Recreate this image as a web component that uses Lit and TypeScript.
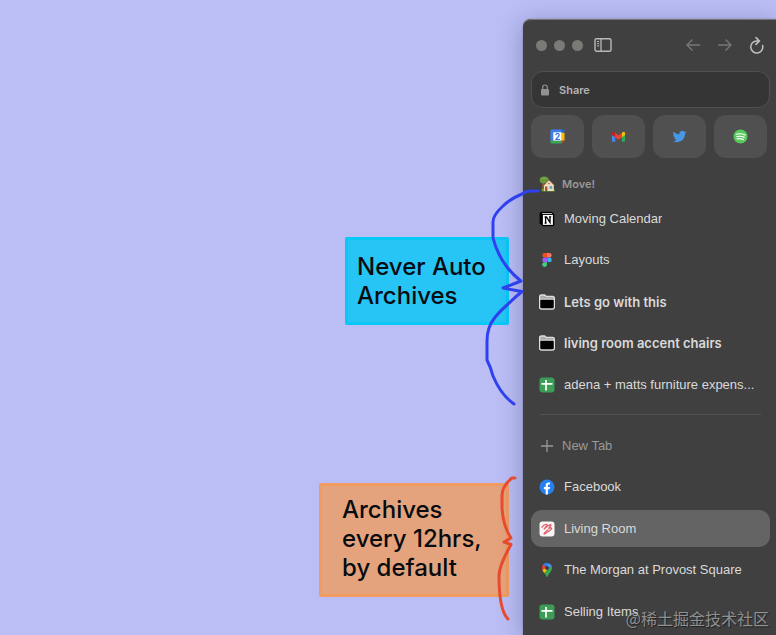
import { LitElement, html, css, svg } from "lit";
import { customElement } from "lit/decorators.js";
import { classMap } from "lit/directives/class-map.js";

type Tab = { name: string; icon: unknown; bold?: boolean; selected?: boolean };

const icon = (box: string, body: unknown) =>
  html`<svg class="icon" viewBox=${box} aria-hidden="true">${body}</svg>`;

const notionIcon = icon("0 0 16 16", svg`
  <path d="M1.800.8h11L15.300 3v11L14 15.300H3.800L.6 12.600V2Z" fill="#000"/>
  <path d="M2.600 1.900h9.800l1.200.9H3.800Z" fill="#fff"/>
  <path d="M3.900 3.900h10v10h-10Z" fill="#fff"/>
  <path d="M6.600 12V6h.9l3.500 5.600V5.600M5.600 6h2M10 5.800h2.200M5.600 12h2" fill="none" stroke="#000" stroke-width="1.300"/>`);

const figmaIcon = icon("0 0 16 16", svg`
  <path d="M8 1H5.600a2.300 2.300 0 0 0 0 4.600H8Z" fill="#f24e1e"/>
  <path d="M8 1h2.400a2.300 2.300 0 0 1 0 4.600H8Z" fill="#ff7262"/>
  <path d="M8 5.600H5.600a2.300 2.300 0 0 0 0 4.600H8Z" fill="#a259ff"/>
  <circle cx="10.400" cy="7.900" r="2.300" fill="#35b5f6"/>
  <path d="M8 10.200H5.600A2.400 2.400 0 1 0 8 12.600Z" fill="#3fd07c"/>`);

const folderIcon = icon("0 0 16 16", svg`
  <path d="M.6 13V2.800Q.6 1 2.400 1H5.600L7.200 2.300H13.600Q15.400 2.300 15.400 4.100V13Q15.400 15 13.400 15H2.600Q.6 15 .6 13Z" fill="#aaa" stroke="#dedede" stroke-width="1.300"/>
  <path d="M1.300 6.500Q1.300 5.400 2.500 5.400H13.500Q14.700 5.400 14.700 6.500V13Q14.700 14.300 13.400 14.300H2.600Q1.300 14.300 1.300 13Z" fill="#000"/>
  <path d="M1.200 6.200Q1.400 5.100 2.500 5.100H13.500Q14.600 5.100 14.800 6.200" fill="none" stroke="#dedede"/>`);

const sheetsIcon = icon("0 0 16 16", svg`
  <rect x=".5" y=".5" width="15" height="15" rx="3" fill="#3c9d57"/>
  <path d="M2.500 6.800h11M7 3v10.500" stroke="#fff" stroke-width="1.700"/>`);

const facebookIcon = icon("0 0 16 16", svg`
  <circle cx="8" cy="8" r="7.500" fill="#2680ee"/>
  <path d="M6.700 15.400V10.200H4.900V8h1.800V6.500c0-2 1.100-3 2.800-3l1.500.1v1.900h-.9c-.9 0-1.200.5-1.200 1.200V8H11l-.4 2.200H8.900v5.200Z" fill="#fff"/>`);

const livingIcon = icon("0 0 16 16", svg`
  <rect x=".5" y=".5" width="15" height="15" rx="3" fill="#f8f4f4"/>
  <path d="M3 6.200Q5.500 2.800 8 3.600Q8.500 4.800 4.800 8.200Q8.500 4.500 11.500 3.600Q13 4 9.500 7.500Q12.500 6.200 12.600 7.500Q11.500 9.500 5.500 13Q3.800 13 9 8.800" fill="none" stroke="#e0606a" stroke-width="1.300" stroke-linecap="round"/>`);

const mapsIcon = icon("0 0 16 16", svg`
  <path d="M3.900 2.700A5.200 5.200 0 0 1 9.600 1.200L8 6Z" fill="#2a80ee"/>
  <path d="M9.600 1.200A5.200 5.200 0 0 1 12.700 3.800L7 9.800L4.300 9Z" fill="#4a90f5"/>
  <path d="M3.900 2.700A5.200 5.200 0 0 0 3.400 8.200L8 4.800Z" fill="#ea4335"/>
  <path d="M3.400 8.200L5.400 11.200L10.200 6L7.500 5Z" fill="#fbbc04"/>
  <path d="M12.700 3.800C14 7 12.200 9 10.700 10.900Q9 13 8.400 15H7.600Q7 13 5.400 11.100Z" fill="#34a853"/>
  <circle cx="8" cy="6" r="1.900" fill="#303a48"/>`);

const plusIcon = icon("0 0 16 16", svg`
  <path d="M2 8h12M8 2v12" stroke="#999" stroke-width="1.300"/>`);

const houseIcon = icon("0 0 16 16", svg`
  <path d="M3 5h1.800v7.500H3Z" fill="#8a5a35"/>
  <ellipse cx="5.200" cy="3.900" rx="4.600" ry="3.500" fill="#67983f"/>
  <path d="M3.200 2.600q2-1.500 4 0" fill="none" stroke="#83b458"/>
  <path d="M2 13.200Q8 10.800 15.800 13.500V15.400H3Z" fill="#5c9437"/>
  <path d="M4.900 9.300L10 4.200L14.800 9V15H4.900Z" fill="#f0dfc1"/>
  <path d="M4.500 9.800L9.900 4L15.200 9.300" fill="none" stroke="#bd6d4d"/>
  <path d="M6 10.500h2.400V15H6Z" fill="#965c38"/>
  <path d="M10.500 10h2.700v3h-2.700Z" fill="#69a9cb"/>
  <circle cx="10" cy="7.600" r=".8" fill="#805d4a"/>`);

const calendarIcon = icon("0 0 16 16", svg`
  <path d="M2 .5h10.500V4H4v8.500H.5V2Q.5.500 2 .5Z" fill="#3c7ff0"/>
  <path d="M12.300.5h1.700q1.500 0 1.500 1.500v2h-3.200Z" fill="#2465d3"/>
  <path d="M12.300 4h3.200v8.300h-3.200Z" fill="#fbbc04"/>
  <path d="M.5 12.300h11.800v3.200H2Q.5 15.500 .5 14Z" fill="#35a853"/>
  <path d="M12.300 12.300h3.200l-3.200 3.200Z" fill="#e74336"/>
  <path d="M3.500 3.500h8.900v8.900H3.500Z" fill="#fff"/>
  <text class="day" x="8" y="11.200" text-anchor="middle">2</text>`);

const gmailIcon = icon("0 0 16 16", svg`
  <path d="M1 5.500L4.500 7.800V13.700H2.200Q1 13.700 1 12.500Z" fill="#4688f0"/>
  <path d="M11.500 7.800L15 5.500V12.500Q15 13.700 13.800 13.700H11.500Z" fill="#35a853"/>
  <path d="M11.500 4.200L12.600 3.200Q15 2.100 15 4.700V6.300L11.500 8.900Z" fill="#fbbc04"/>
  <path d="M1 4.700Q1 2.100 3.400 3.200L4.500 4.200V8.900L1 6.300Z" fill="#c5221f"/>
  <path d="M4.400 4.100L8 6.800L11.600 4.100V8.800L8 11.500L4.400 8.800Z" fill="#ea4335"/>`);

const twitterIcon = icon("-1 -1 26 26", svg`
  <path d="M23.950 4.570a10 10 0 0 1-2.820.77 4.960 4.960 0 0 0 2.160-2.720c-.95.550-2 .95-3.130 1.180a4.920 4.920 0 0 0-8.380 4.480C7.690 8.100 4.070 6.130 1.640 3.160a4.820 4.820 0 0 0-.67 2.480c0 1.710.87 3.210 2.190 4.100a4.900 4.900 0 0 1-2.230-.62v.06a4.920 4.920 0 0 0 3.950 4.830 5 5 0 0 1-2.210.08 4.940 4.940 0 0 0 4.600 3.420A9.870 9.870 0 0 1 0 19.540a13.990 13.990 0 0 0 7.560 2.210c9.050 0 14-7.500 14-13.980 0-.21 0-.42-.02-.63a9.940 9.940 0 0 0 2.460-2.550Z" fill="#4699e9"/>`);

const spotifyIcon = icon("0 0 16 16", svg`
  <circle cx="8" cy="8" r="7.500" fill="#58ca5d"/>
  <path d="M3.500 5.600Q8.500 4.200 12.800 6.400M4 8.200Q8.300 7 12 8.900M4.400 10.600Q8 9.700 11.200 11.300" fill="none" stroke="#fff" stroke-width="1.300" stroke-linecap="round"/>`);

const favorites = [
  { name: "Calendar", icon: calendarIcon },
  { name: "Gmail", icon: gmailIcon },
  { name: "Twitter", icon: twitterIcon },
  { name: "Spotify", icon: spotifyIcon },
];

const pinned: Tab[] = [
  { name: "Moving Calendar", icon: notionIcon },
  { name: "Layouts", icon: figmaIcon },
  { name: "Lets go with this", icon: folderIcon, bold: true },
  { name: "living room accent chairs", icon: folderIcon, bold: true },
  { name: "adena + matts furniture expens...", icon: sheetsIcon },
];

const today: Tab[] = [
  { name: "Facebook", icon: facebookIcon },
  { name: "Living Room", icon: livingIcon, selected: true },
  { name: "The Morgan at Provost Square", icon: mapsIcon },
  { name: "Selling Items", icon: sheetsIcon },
];

@customElement("browser-sidebar")
export class BrowserSidebar extends LitElement {
  static styles = css`
    :host {
      display: block;
      box-sizing: border-box;
      padding: 9px 6px 4px 8px;
      border-radius: 8px 0 0 0;
      background: #404040;
      border-top: 1px solid #77777c;
      box-shadow: 0 4px 24px rgba(20, 20, 60, 0.3), 0 0 1px #333;
      color: #dadada;
      font: 13px/20px "Liberation Sans", sans-serif;
    }
    button, input { font: inherit; color: inherit; }
    button { padding: 0; border: 0; background: none; }
    a { color: inherit; text-decoration: none; }
    .toolbar { display: flex; align-items: center; height: 32px; padding: 0 5px; }
    .lights { display: flex; gap: 7px; margin-right: 11px; }
    .light { width: 11px; height: 11px; border-radius: 50%; background: #7c7a77; }
    .nav { display: flex; gap: 16px; margin-left: auto; }
    .tool { display: block; height: 18px; }
    .tool svg { display: block; width: 16px; height: 18px; fill: none; overflow: visible; }
    .tool .wide { width: 18px; }
    .address {
      display: flex;
      align-items: center;
      gap: 10px;
      height: 35px;
      margin-top: 10px;
      padding: 0 9px;
      border: 1px solid #505050;
      border-radius: 12px;
      background: #353535;
    }
    .lock { width: 8px; height: 12px; }
    .field {
      flex: 1;
      min-width: 0;
      padding: 0;
      border: 0;
      outline: 0;
      background: none;
      color: #b4b4b4;
      font: 600 11px/20px Inter, sans-serif;
    }
    .favorites { display: grid; grid-template-columns: repeat(4, 1fr); gap: 8px; margin: 7px 3px 0 0; }
    .favorite { display: grid; place-items: center; height: 43px; border-radius: 12px; background: #505050; }
    .icon { display: block; flex: none; width: 16px; height: 16px; }
    .favorite .icon { width: 15px; height: 15px; }
    .day { font: 700 9px Inter, sans-serif; fill: #2f6fe0; }
    .space {
      display: flex;
      align-items: center;
      gap: 7px;
      height: 20px;
      margin: 16px 0 6px;
      padding: 0 8px;
      color: #999;
      font: 600 11px/20px Inter, sans-serif;
    }
    .tabs {
      display: flex;
      flex-direction: column;
      justify-content: space-between;
      min-height: 203px;
      margin: 0;
      padding: 0;
      list-style: none;
    }
    .tab {
      display: flex;
      align-items: center;
      gap: 9px;
      box-sizing: border-box;
      width: 100%;
      height: 37px;
      padding: 0 8px;
      border-radius: 11px;
      text-align: left;
    }
    .tab.bold { font: 600 13px/20px Inter, sans-serif; }
    .tab.selected { background: #646464; }
    .tab.new { gap: 7px; color: #999; }
    .name { overflow: hidden; white-space: nowrap; text-overflow: ellipsis; }
    .divider { height: 1px; margin: 11px 9px 12px; border: 0; background: #515151; }
  `;

  private row(tab: Tab) {
    const classes = { tab: true, bold: !!tab.bold, selected: !!tab.selected };
    return html`<li><a class=${classMap(classes)} href="#">${tab.icon}<span class="name">${tab.name}</span></a></li>`;
  }

  render() {
    return html`
      <div class="toolbar">
        <div class="lights">
          <button class="light" aria-label="Close"></button>
          <button class="light" aria-label="Minimize"></button>
          <button class="light" aria-label="Zoom"></button>
        </div>
        <button class="tool" aria-label="Toggle sidebar">
          <svg class="wide" viewBox="0 0 18 18" stroke="#b8b8b8">
            <rect x="1" y="2.700" width="16" height="12.600" rx="1.500" stroke-width="1.400"/>
            <path d="M7 3v12" stroke-width="1.300"/>
            <path d="M3 5.500h2.200M3 7.700h2.200M3 9.900h2.200"/>
          </svg>
        </button>
        <div class="nav">
          <button class="tool" aria-label="Back">
            <svg viewBox="0 0 16 18" stroke="#777" stroke-width="1.400" stroke-linecap="round"><path d="M14.500 9H2M7 4L2 9l5 5"/></svg>
          </button>
          <button class="tool" aria-label="Forward">
            <svg viewBox="0 0 16 18" stroke="#777" stroke-width="1.400" stroke-linecap="round"><path d="M1.500 9H14M9 4l5 5-5 5"/></svg>
          </button>
          <button class="tool" aria-label="Reload">
            <svg viewBox="0 0 16 18" stroke="#c2c2c2" stroke-width="1.500" stroke-linecap="round"><path d="M13.600 9.600A6 6 0 1 1 7.900 5H9.500M7 1.600L10.400 5L7 8.400"/></svg>
          </button>
        </div>
      </div>
      <label class="address">
        <svg class="lock" viewBox="0 0 8 12" aria-hidden="true">
          <path d="M1.700 6V3.500a2.300 2.500 0 0 1 4.600 0V6" fill="none" stroke="#929292" stroke-width="1.200"/>
          <rect y="5" width="8" height="6.500" rx="1" fill="#929292"/>
        </svg>
        <input class="field" aria-label="Address" value="Share">
      </label>
      <nav class="favorites">
        ${favorites.map((f) => html`<a class="favorite" href="#" aria-label=${f.name}>${f.icon}</a>`)}
      </nav>
      <div class="space">${houseIcon}<span>Move!</span></div>
      <ul class="tabs">${pinned.map((t) => this.row(t))}</ul>
      <hr class="divider">
      <ul class="tabs">
        <li><button class="tab new">${plusIcon}<span class="name">New Tab</span></button></li>
        ${today.map((t) => this.row(t))}
      </ul>
    `;
  }
}

@customElement("app-root")
export class AppRoot extends LitElement {
  static styles = css`
    :host {
      display: grid;
      position: relative;
      grid-template-columns: minmax(0, 1fr) 253px;
      min-height: 100vh;
      overflow: hidden;
      background: #bbbef5;
    }
    .notes {
      display: flex;
      flex-direction: column;
      align-items: flex-end;
      gap: 158px;
      padding: 237px 14px 0 0;
    }
    .note {
      margin: 0;
      box-sizing: border-box;
      border: 3px solid;
      border-radius: 2px;
      color: #080c10;
      font: 500 24px/29px Inter, sans-serif;
    }
    .line { display: block; }
    .never { width: 164px; padding: 12px 0 12px 9px; background: #27c5f5; border-color: #08c8f8; }
    .daily { width: 190px; padding: 9px 0 12px 20px; background: #e4a37c; border-color: #f09c60; }
    .window { position: relative; display: grid; grid-template-columns: minmax(0, 1fr); margin-top: 19px; }
    .braces { position: absolute; left: -43px; top: 161px; width: 70px; height: 450px; fill: none; pointer-events: none; }
    .watermark {
      position: absolute;
      right: 7px;
      bottom: 5px;
      color: rgba(175, 175, 175, 0.75);
      font: 16px/24px "Noto Sans CJK SC", sans-serif;
      text-shadow: 1px 1px 1px rgba(0, 0, 0, 0.5);
    }
  `;

  render() {
    return html`
      <section class="notes">
        <p class="note never"><span class="line">Never Auto</span><span class="line">Archives</span></p>
        <p class="note daily"><span class="line">Archives</span><span class="line">every 12hrs,</span><span class="line">by default</span></p>
      </section>
      <div class="window">
        <browser-sidebar></browser-sidebar>
        <svg class="braces" viewBox="480 180 70 450" stroke-width="3" stroke-linecap="round" stroke-linejoin="round" aria-hidden="true">
          <path stroke="#2f40ee" d="M538 191H530Q526 191 522 194Q510 199 503 206Q493 215 493 222V238Q497 254 507 267Q513 275 521 281L503 288L522 291.500Q513 299 507 305Q492 318 489 328Q487 334 487 341V360Q491 368 493 376Q501 395 514 404"/>
          <path stroke="#e64b30" d="M515 478H512Q502 486 502 496V508Q503 526 511 538L504 542L511 544.500Q499 566 499 576Q499 610 508 619"/>
        </svg>
      </div>
      <div class="watermark">@稀土掘金技术社区</div>
    `;
  }
}
